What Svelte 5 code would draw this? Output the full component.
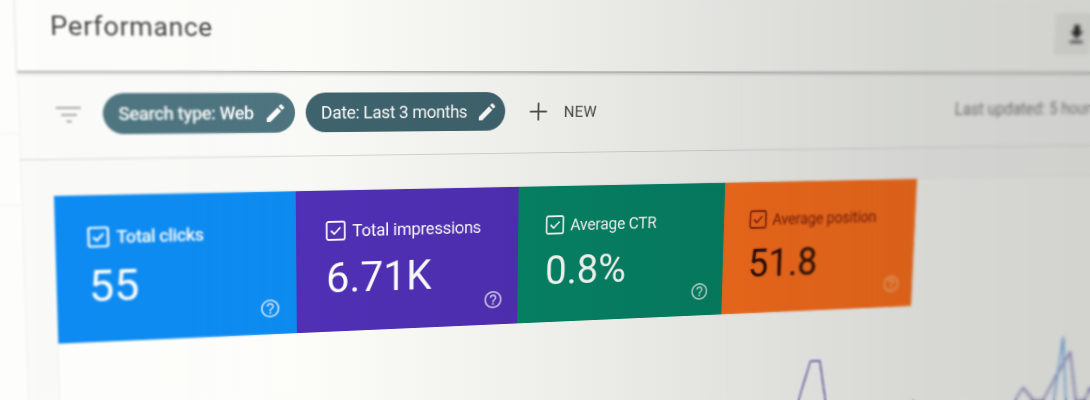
<script>
  // where the metric row (960 x 150) lands on screen, the whole sheet follows it
  const rowX = 91
  const rowY = 213
  const quad = [[54, 196], [917, 179], [911, 306], [58.4, 343.7]]

  function perspective([p0, p1, p2, p3]) {
    const sx = p0[0] - p1[0] + p2[0] - p3[0]
    const sy = p0[1] - p1[1] + p2[1] - p3[1]
    const dx1 = p1[0] - p2[0]
    const dx2 = p3[0] - p2[0]
    const dy1 = p1[1] - p2[1]
    const dy2 = p3[1] - p2[1]
    const det = dx1 * dy2 - dx2 * dy1
    const g = (sx * dy2 - dx2 * sy) / det
    const h = (dx1 * sy - sx * dy1) / det
    const a = p1[0] - p0[0] + g * p1[0]
    const b = p3[0] - p0[0] + h * p3[0]
    const d = p1[1] - p0[1] + g * p1[1]
    const e = p3[1] - p0[1] + h * p3[1]
    const off = (m, n, k) => k - (m * rowX) / 960 - (n * rowY) / 150
    return `matrix3d(${[
      a / 960, d / 960, 0, g / 960,
      b / 150, e / 150, 0, h / 150,
      0, 0, 1, 0,
      off(a, b, p0[0]), off(d, e, p0[1]), 0, off(g, h, 1)
    ].join(',')})`
  }

  const sheetTransform = perspective(quad)

  const metrics = [
    { id: 'clicks', label: 'Total clicks', value: '55' },
    { id: 'impressions', label: 'Total impressions', value: '6.71K' },
    { id: 'ctr', label: 'Average CTR', value: '0.8%' },
    { id: 'position', label: 'Average position', value: '51.8' }
  ]

  const pencil = 'M3 17.25V21h3.75L17.81 9.94l-3.75-3.75L3 17.25zM20.71 7.04c.39-.39.39-1.02 0-1.41l-2.34-2.34c-.39-.39-1.02-.39-1.41 0l-1.83 1.83 3.75 3.75 1.83-1.83z'
  const help = 'M11 18h2v-2h-2v2zm1-16C6.48 2 2 6.48 2 12s4.48 10 10 10 10-4.48 10-10S17.52 2 12 2zm0 18c-4.41 0-8-3.59-8-8s3.59-8 8-8 8 3.59 8 8-3.59 8-8 8zm0-14c-2.21 0-4 1.79-4 4h2c0-1.1.9-2 2-2s2 .9 2 2c0 2-3 1.75-3 5h2c0-2.25 3-2.5 3-5 0-2.21-1.79-4-4-4z'
</script>

<div class="photo">
  <div class="sheet" style="transform: {sheetTransform}">
    <aside class="sidebar">
      <div class="side-item"></div>
      <div class="side-item"></div>
    </aside>
    <main>
      <header>
        <h1>Performance</h1>
        <button class="download" aria-label="Export">
          <svg viewBox="0 0 24 24" width="30" height="30"><path d="M19 9h-4V3H9v6H5l7 7 7-7zM5 18v2h14v-2H5z" /></svg>
        </button>
      </header>

      <div class="filters">
        <svg class="filter-icon" viewBox="0 0 24 16" width="24" height="16">
          <path d="M0 1.5h24M5 8.5h15M10 15h5" />
        </svg>
        <span class="chip soft">Search type: Web
          <svg viewBox="0 0 24 24" width="24" height="24"><path d={pencil} /></svg>
        </span>
        <span class="chip dark">Date: Last 3 months
          <svg viewBox="0 0 24 24" width="24" height="24"><path d={pencil} /></svg>
        </span>
        <span class="add">
          <svg viewBox="0 0 32 32" width="32" height="32"><path d="M6.5 16h19M16 6.5v19" /></svg>
          NEW
        </span>
        <span class="updated">Last updated: 5 hours ago</span>
      </div>

      <section class="panel">
        <div class="metrics">
          {#each metrics as m}
            <div class="metric {m.id}">
              <div class="metric-label">
                <svg viewBox="0 0 21 21" width="21" height="21">
                  <rect x="1" y="1" width="19" height="19" rx="2" />
                  <path d="M5.5 10.5l3.5 3.5 6.5-7" />
                </svg>
                {m.label}
              </div>
              <div class="metric-value">{m.value}</div>
              <svg class="help" viewBox="0 0 24 24" width="23" height="23"><path d={help} /></svg>
            </div>
          {/each}
        </div>
        <svg class="chart" viewBox="0 0 1240 150" width="1240" height="150">
          <polyline class="line-impressions" points="700,150 790,150 820,105 833,60 845,60 854,107 880,150 930,150 969,114 1000,150 1090,150 1107,122 1117,107 1132,123 1146,124 1161,97 1180,66 1192,127 1205,127 1212,110 1240,80" />
          <polyline class="line-clicks" points="1145,150 1161,125 1169,47 1178,126 1186,150" />
        </svg>
      </section>
    </main>
  </div>

  <div class="light"></div>
  <div class="blur near-left"></div>
  <div class="blur mid-right"></div>
  <div class="blur far-right"></div>
</div>

<style>
  :global(body) {
    margin: 0;
    background: #eee;
  }
  .photo {
    width: 1090px;
    height: 400px;
    position: relative;
    overflow: hidden;
    font-family: Roboto, "Liberation Sans", sans-serif;
  }
  .sheet {
    width: 1360px;
    height: 520px;
    display: flex;
    transform-origin: 0 0;
    background: #fbfbfa;
  }
  .sidebar {
    width: 60px;
    flex: none;
    padding-top: 150px;
    background: #fdfdfc;
    box-shadow: 1px 0 1px rgba(0, 0, 0, 0.03);
    position: relative;
  }
  .side-item {
    height: 70px;
    border-top: 1px solid #f3f3f2;
  }
  main {
    flex: 1;
    min-width: 0;
    background: #fafaf9;
  }
  header {
    height: 90px;
    box-sizing: border-box;
    padding: 0 89px 0 32px;
    display: flex;
    align-items: center;
    justify-content: space-between;
    background: #fdfdfc;
    border-bottom: 1px solid #a4a4a2;
    box-shadow: 0 2px 3px rgba(0, 0, 0, 0.18);
    position: relative;
  }
  h1 {
    margin: 0;
    font-size: 26px;
    font-weight: 400;
    letter-spacing: 0.6px;
    color: #484848;
  }
  .download {
    width: 48px;
    height: 49px;
    padding: 0 0 0 12px;
    border: 0;
    display: flex;
    align-items: center;
    justify-content: center;
    background: #f0f0ee;
  }
  .download path {
    fill: #2b2b2b;
  }
  .filters {
    height: 87px;
    box-sizing: border-box;
    padding: 0 33px 3px 35px;
    display: flex;
    align-items: center;
    background: #fbfbfa;
    border-bottom: 1px solid #d6d6d4;
  }
  .filter-icon {
    margin-right: 21px;
    flex: none;
  }
  .filter-icon path {
    fill: none;
    stroke: #8c8c8c;
    stroke-width: 1.6;
  }
  .chip {
    height: 41px;
    margin-right: 11px;
    padding: 0 8px 0 15px;
    display: flex;
    align-items: center;
    gap: 10px;
    border-radius: 21px;
    background: #4e7581;
    color: #fff;
    font-size: 18px;
    white-space: nowrap;
    flex: none;
  }
  .chip.soft {
    font-weight: 500;
    letter-spacing: -0.35px;
  }
  .chip.dark {
    padding-left: 16px;
    background: #3f646f;
    letter-spacing: -0.27px;
  }
  .chip path {
    fill: #fff;
  }
  .add {
    margin-left: 10px;
    display: flex;
    align-items: center;
    gap: 12px;
    font-size: 17px;
    letter-spacing: 0.3px;
    color: #4c4c4c;
  }
  .add path {
    fill: none;
    stroke: #505050;
    stroke-width: 2;
  }
  .updated {
    margin-left: auto;
    font-size: 20px;
    white-space: nowrap;
    color: #7a7a78;
  }
  .panel {
    margin: 36px 0 0 31px;
    background: #fefefd;
    box-shadow: 0 0 2px rgba(0, 0, 0, 0.12);
  }
  .metrics {
    width: 960px;
    display: grid;
    grid-template-columns: repeat(4, 240px);
  }
  .metric {
    height: 150px;
    box-sizing: border-box;
    padding: 31px 16px 16px 31px;
    display: flex;
    flex-direction: column;
    color: #fff;
  }
  .metric-label {
    height: 22px;
    display: flex;
    align-items: center;
    gap: 7px;
    font-size: 18px;
    letter-spacing: -0.2px;
    white-space: nowrap;
  }
  .metric-label rect,
  .metric-label path {
    fill: none;
    stroke: currentColor;
    stroke-width: 1.8;
  }
  .metric-value {
    margin-top: 18px;
    height: 40px;
    line-height: 44px;
    font-size: 44px;
    white-space: nowrap;
  }
  .help {
    align-self: flex-end;
    fill: currentColor;
    opacity: 0.7;
  }
  .clicks {
    background: #0e8cf3;
  }
  .clicks .metric-label {
    font-weight: 500;
    letter-spacing: -0.4px;
  }
  .clicks rect,
  .clicks .metric-label path {
    stroke-width: 2.2;
  }
  .impressions {
    background: #5030b8;
  }
  .ctr {
    background: #068568;
  }
  .position {
    background: #ff711e;
    color: #2a0c06;
  }
  .position .metric-label {
    color: #7c1c0a;
  }
  .position .help {
    color: #ffbc80;
    opacity: 0.85;
  }
  .chart {
    display: block;
  }
  .chart polyline {
    fill: none;
    stroke-width: 2;
    stroke-linejoin: round;
  }
  .line-impressions {
    stroke: #6c66b4;
  }
  .line-clicks {
    stroke: #5a9ce6;
    stroke-width: 3;
  }
  .light {
    position: absolute;
    inset: 0;
    mix-blend-mode: multiply;
    background: linear-gradient(90deg, #fff 0%, #fdfdfb 28%, #f1f1ef 48%, #e4e4e2 66%, #d9dad7 84%, #d4d5d2 100%);
  }
  .blur {
    position: absolute;
    inset: 0;
  }
  .near-left {
    backdrop-filter: blur(0.9px);
    mask-image: linear-gradient(90deg, #000 0, #000 190px, transparent 300px);
  }
  .mid-right {
    backdrop-filter: blur(0.9px);
    mask-image: linear-gradient(90deg, transparent 700px, #000 800px);
  }
  .far-right {
    backdrop-filter: blur(1.8px);
    mask-image: linear-gradient(90deg, transparent 860px, #000 980px);
  }
</style>
